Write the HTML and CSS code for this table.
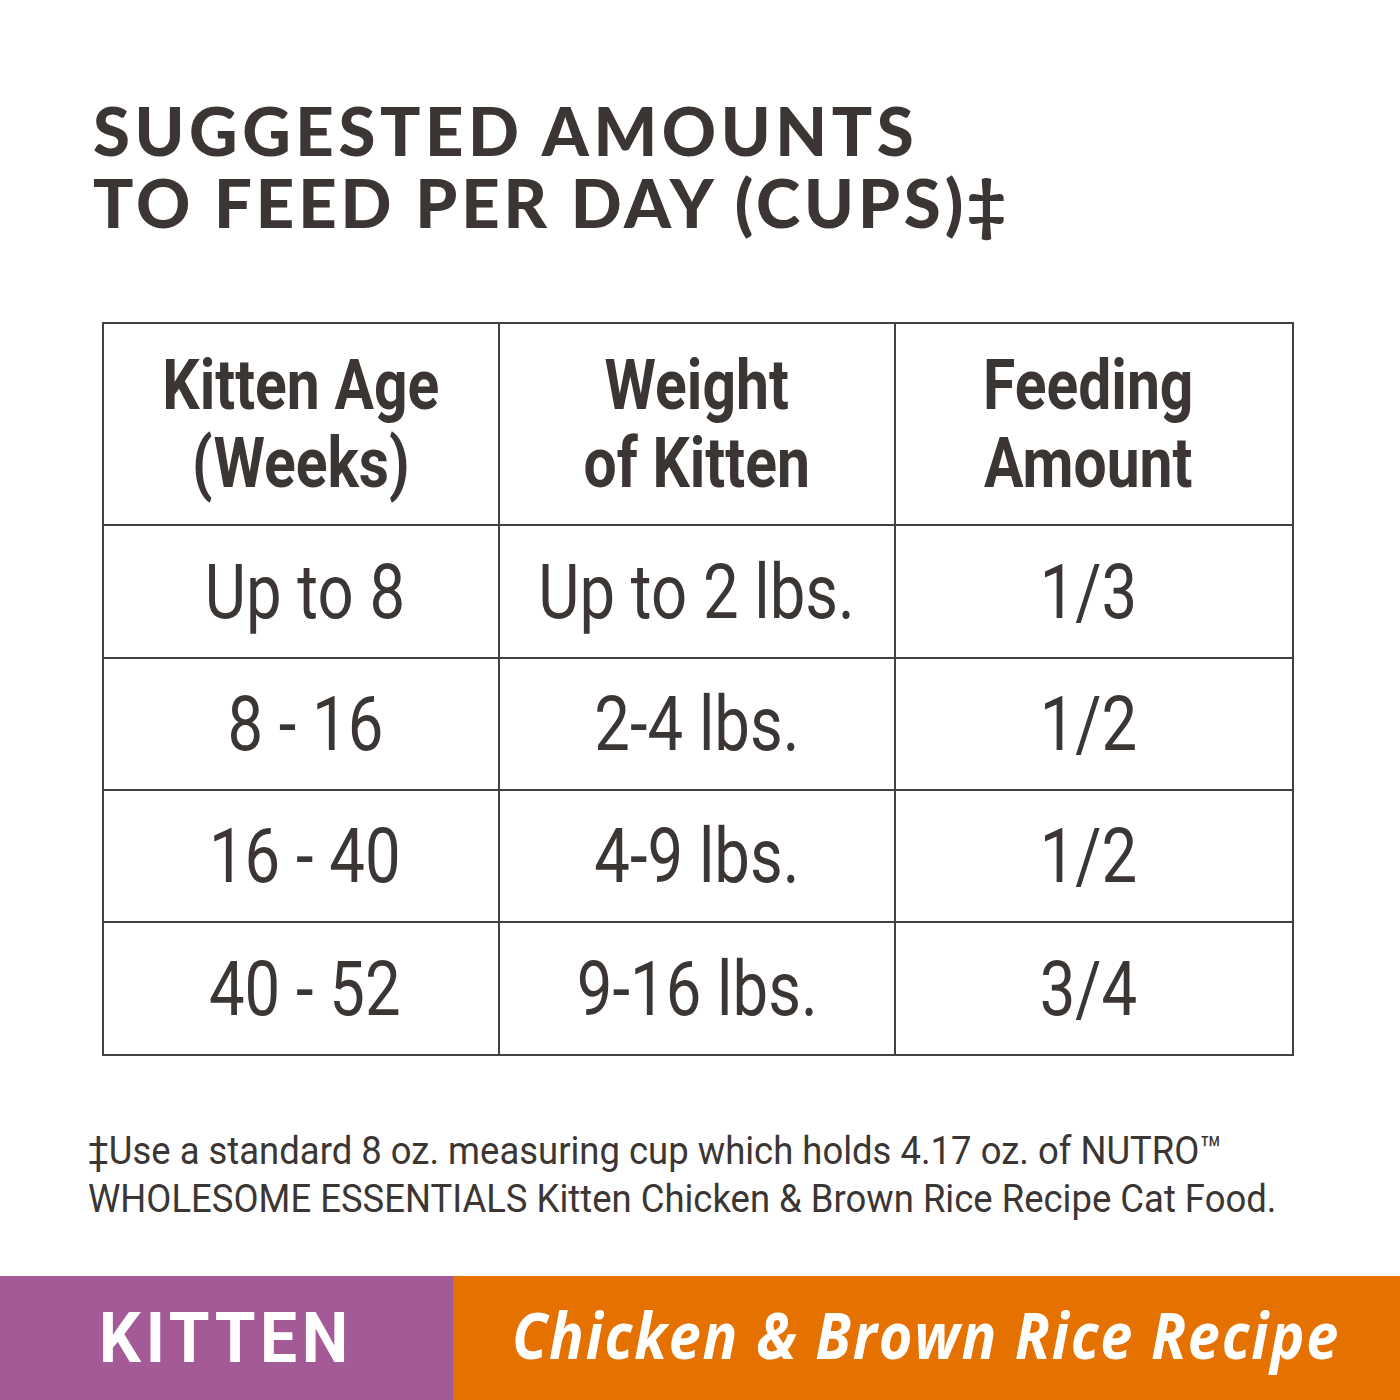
FILE: index.html
```html
<!DOCTYPE html>
<html lang="en">
<head>
<meta charset="utf-8">
<title>Suggested Amounts to Feed Per Day</title>
<link rel="stylesheet" href="styles.css">
</head>
<body>
<div class="page">
  <h1 class="title"><span class="title-line">SUGGESTED AMOUNTS</span><span class="title-line">TO FEED PER DAY (CUPS)‡</span></h1>
  <table class="feed">
    <colgroup>
      <col class="c1"><col class="c2"><col class="c3">
    </colgroup>
    <thead>
      <tr class="head">
        <th><span class="sq">Kitten Age<br>(Weeks)</span></th>
        <th><span class="sq">Weight<br>of Kitten</span></th>
        <th><span class="sq">Feeding<br>Amount</span></th>
      </tr>
    </thead>
    <tbody>
      <tr class="r1"><td><span class="sq">Up to 8</span></td><td><span class="sq">Up to 2 lbs.</span></td><td><span class="sq">1/3</span></td></tr>
      <tr class="r2"><td><span class="sq">8 - 16</span></td><td><span class="sq">2-4 lbs.</span></td><td><span class="sq">1/2</span></td></tr>
      <tr class="r3"><td><span class="sq">16 - 40</span></td><td><span class="sq">4-9 lbs.</span></td><td><span class="sq">1/2</span></td></tr>
      <tr class="r4"><td><span class="sq">40 - 52</span></td><td><span class="sq">9-16 lbs.</span></td><td><span class="sq">3/4</span></td></tr>
    </tbody>
  </table>
  <p class="note"><span class="note-in">‡Use a standard 8 oz. measuring cup which holds 4.17 oz. of NUTRO™<br>WHOLESOME ESSENTIALS Kitten Chicken &amp; Brown Rice Recipe Cat Food.</span></p>
  <div class="bar">
    <div class="bar-life"><span class="life-text">KITTEN</span></div>
    <div class="bar-recipe"><span class="recipe-text">Chicken &amp; Brown Rice Recipe</span></div>
  </div>
</div>
</body>
</html>
```
FILE: styles.css
```css
html, body {
  margin: 0;
  padding: 0;
  background: #ffffff;
}
.page {
  width: 1400px;
  height: 1400px;
  overflow: hidden;
  display: flex;
  flex-direction: column;
  color: #3b3633;
}
.title {
  margin: 94px 0 0 93px;
  font-family: Lato, "Liberation Sans", sans-serif;
  font-weight: 900;
  font-size: 67px;
  line-height: 72px;
  white-space: nowrap;
}
.title-line {
  display: block;
  height: 72px;
}
.title-line:first-child {
  letter-spacing: 4.6px;
}
.title-line:last-child {
  letter-spacing: 3.9px;
}
.feed {
  margin: 84px 0 0 102px;
  width: 1190px;
  border-collapse: collapse;
  table-layout: fixed;
  font-family: Roboto, "Liberation Sans", sans-serif;
}
.c1 { width: 396px; }
.c2 { width: 396px; }
.c3 { width: 398px; }
.feed th, .feed td {
  border: 2px solid #45403d;
  padding: 0;
  text-align: center;
  vertical-align: middle;
  white-space: nowrap;
}
.feed th:last-child, .feed td:last-child {
  padding-right: 12px;
}
.feed td:first-child {
  padding-left: 8px;
}
.head th {
  height: 200px;
  font-weight: 700;
  font-size: 70px;
  line-height: 78px;
}
.head .sq {
  transform: scaleX(0.84);
}
.feed td {
  font-weight: 400;
  font-size: 76px;
  line-height: 90px;
}
.feed td .sq {
  transform: scaleX(0.835);
}
.r1 td { height: 131px; }
.r2 td { height: 130px; }
.r3 td { height: 130px; }
.r4 td { height: 131px; }
.sq {
  display: inline-block;
  transform-origin: center;
}
.note {
  margin: 71px 0 0 88px;
  font-family: Roboto, "Liberation Sans", sans-serif;
  font-weight: 400;
  font-size: 39px;
  line-height: 48px;
  white-space: nowrap;
}
.note-in {
  display: inline-block;
  transform: scaleX(0.935);
  transform-origin: left center;
}
.bar {
  margin-top: auto;
  height: 124px;
  display: flex;
}
.bar-life {
  width: 453px;
  background: #a45a96;
  display: flex;
  align-items: center;
  justify-content: center;
}
.bar-recipe {
  flex: 1;
  background: #e47100;
  display: flex;
  align-items: center;
  justify-content: center;
  padding-bottom: 8px;
}
.life-text {
  display: inline-block;
  color: #ffffff;
  font-family: Roboto, "Liberation Sans", sans-serif;
  font-weight: 700;
  font-size: 70px;
  letter-spacing: 5px;
  transform: scaleX(0.94);
}
.recipe-text {
  display: inline-block;
  color: #ffffff;
  font-family: "Open Sans", "Liberation Sans", sans-serif;
  font-style: italic;
  font-weight: 700;
  font-size: 64px;
  letter-spacing: 2px;
  transform: scaleX(0.9);
}
```
